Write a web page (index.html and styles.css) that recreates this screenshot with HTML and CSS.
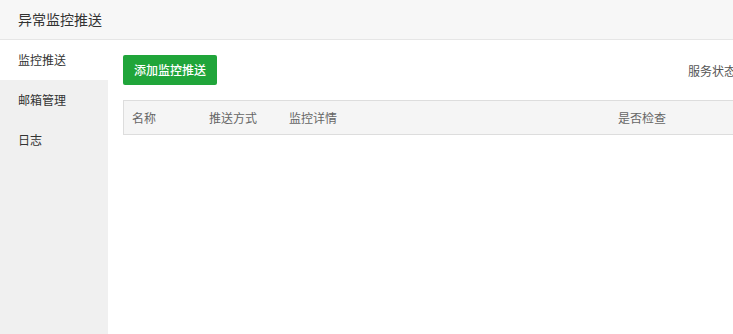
FILE: index.html
```html
<!DOCTYPE html>
<html lang="zh">
<head>
<meta charset="utf-8">
<title>异常监控推送</title>
<link rel="stylesheet" href="styles.css">
</head>
<body>
<div class="app">
  <header class="topbar">异常监控推送</header>
  <div class="body">
    <nav class="sidebar">
      <div class="nav-item active">监控推送</div>
      <div class="nav-item">邮箱管理</div>
      <div class="nav-item">日志</div>
    </nav>
    <main class="content">
      <div class="toolbar">
        <button class="btn-add">添加监控推送</button>
        <div class="status">服务状态：</div>
      </div>
      <div class="table-head">
        <div class="col c-name">名称</div>
        <div class="col c-way">推送方式</div>
        <div class="col c-detail">监控详情</div>
        <div class="col c-check">是否检查</div>
      </div>
    </main>
  </div>
</div>
</body>
</html>
```
FILE: styles.css
```css
* { box-sizing: border-box; }
html, body { margin: 0; padding: 0; height: 100%; overflow: hidden; }
body {
  font-family: "Noto Sans CJK SC", "Noto Sans", sans-serif;
  color: #333;
  background: #fff;
}
.app { width: 800px; height: 100%; display: flex; flex-direction: column; }
.topbar {
  height: 40px;
  line-height: 39px;
  padding-left: 18px;
  font-size: 14px;
  color: #333;
  background: #f7f7f7;
  border-bottom: 1px solid #e6e6e6;
}
.body { flex: 1; display: flex; }
.sidebar { width: 108px; background: #f0f0f0; }
.nav-item {
  height: 40px;
  line-height: 40px;
  padding-left: 18px;
  font-size: 12px;
  color: #333;
}
.nav-item.active { background: #fff; }
.content { flex: 1; padding: 15px 0 0 15px; }
.toolbar { display: flex; align-items: center; height: 30px; }
.btn-add {
  height: 30px;
  padding: 0 11px;
  border: none;
  border-radius: 2px;
  background: #20a53a;
  color: #fff;
  font-family: inherit;
  font-size: 12px;
  font-weight: 500;
  line-height: 30px;
}
.status { margin-left: 471px; font-size: 12px; color: #555; white-space: nowrap; }
.table-head {
  margin-top: 15px;
  height: 35px;
  display: flex;
  align-items: center;
  background: #f5f5f5;
  border: 1px solid #ddd;
  font-size: 12px;
  color: #666;
}
.col { padding-left: 8px; }
.c-name { width: 77px; }
.c-way { width: 80px; }
.c-detail { width: 329px; }
.c-check { width: 120px; }
```
